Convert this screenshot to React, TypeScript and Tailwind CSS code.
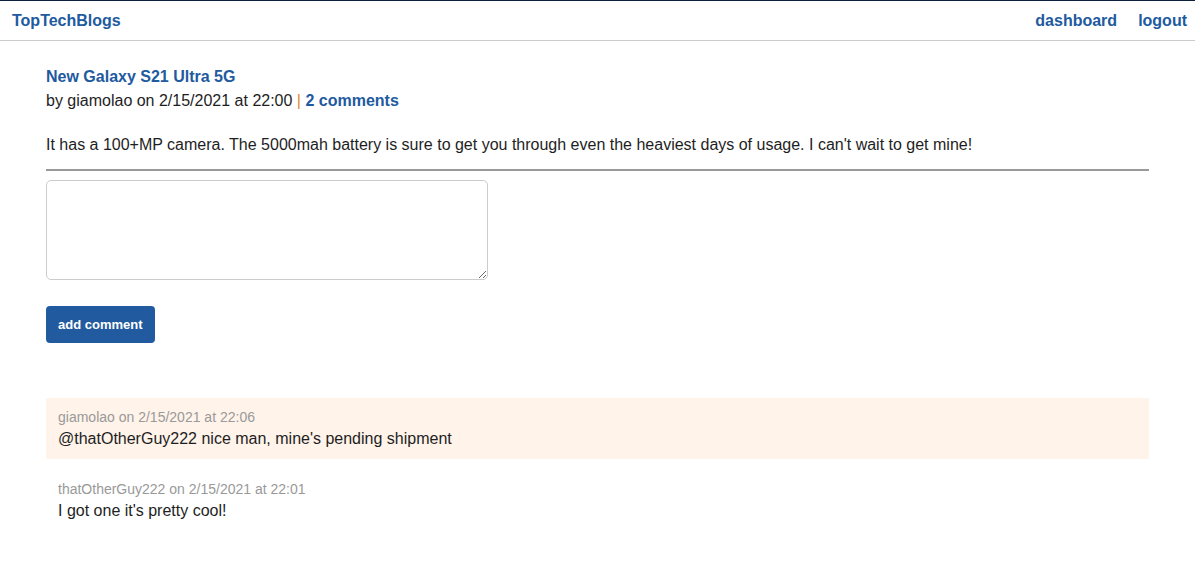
const comments = [
  { user: 'giamolao', date: '2/15/2021 at 22:06', text: "@thatOtherGuy222 nice man, mine's pending shipment", highlight: true },
  { user: 'thatOtherGuy222', date: '2/15/2021 at 22:01', text: "I got one it's pretty cool!", highlight: false },
];

export default function App() {
  return (
    <div className="min-h-[561px] bg-white font-['Liberation_Sans',Arial,sans-serif] text-[#1e1e1e]">
      {/* Top nav */}
      <header className="flex h-[41px] items-center justify-between border-t border-b border-t-[#0d1f3c] border-b-[#ccc] pl-3 pr-2 text-base font-bold text-[#215a9f]">
        <a href="#">TopTechBlogs</a>
        <nav className="flex gap-[21px]">
          <a href="#">dashboard</a>
          <a href="#">logout</a>
        </nav>
      </header>

      <main className="px-[46px] pt-[25px]">
        {/* Post */}
        <h2 className="text-base font-bold leading-[22px] text-[#215a9f]">New Galaxy S21 Ultra 5G</h2>
        <p className="leading-[26px]">
          by giamolao on 2/15/2021 at 22:00 <span className="text-[#e08a2a]">|</span>{' '}
          <a href="#" className="font-bold text-[#215a9f]">2 comments</a>
        </p>
        <p className="mt-[19px] leading-6">
          It has a 100+MP camera. The 5000mah battery is sure to get you through even the heaviest days of usage. I can't wait to get mine!
        </p>
        <hr className="mt-[12px] border-t-2 border-[#999]" />

        {/* Comment form */}
        <form className="mt-[9px] flex flex-col items-start">
          <textarea className="h-[100px] w-[442px] rounded-[5px] border border-[#ccc] p-2 outline-none" />
          <button type="button" className="mt-[26px] h-[37px] rounded-[4px] bg-[#215a9f] px-3 text-[13px] font-bold text-white">
            add comment
          </button>
        </form>

        {/* Comments */}
        <div className="mt-[55px] flex flex-col gap-[11px]">
          {comments.map((c) => (
            <div key={c.user + c.date} className={`px-3 py-[9px] ${c.highlight ? 'bg-[#fff3ea]' : ''}`}>
              <p className="text-sm leading-[21px] text-[#999]">
                {c.user} on {c.date}
              </p>
              <p className="leading-[22px]">{c.text}</p>
            </div>
          ))}
        </div>
      </main>
    </div>
  );
}
